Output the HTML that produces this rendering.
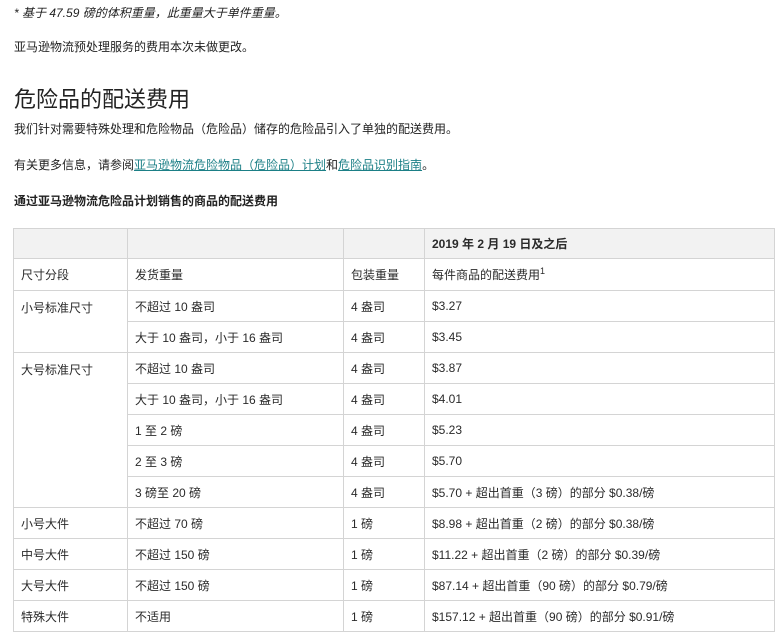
<!DOCTYPE html>
<html><head><meta charset="utf-8"><style>
body{margin:0;background:#fff;font-family:"Liberation Sans","Noto Sans CJK SC",sans-serif;color:#222;font-size:12px;width:779px;height:640px;overflow:hidden;position:relative}
.t{position:absolute;left:14px;white-space:nowrap}
a{color:#1b7f86;text-decoration:underline}
table{position:absolute;left:13px;top:228px;border-collapse:collapse;table-layout:fixed;width:762px}
td{border:1px solid #d4d4d4;padding:0 0 0 7px;height:30px;font-size:12px;vertical-align:middle;white-space:nowrap;color:#2a2a2a}
tr.h td{background:#f2f2f2;height:29px;font-weight:bold}
td.top{vertical-align:top;padding-top:8px}
sup{font-size:9px}
</style></head><body>
<div class="t" style="top:4px;font-style:italic;font-size:12px">* 基于 47.59 磅的体积重量，此重量大于单件重量。</div>
<div class="t" style="top:38px">亚马逊物流预处理服务的费用本次未做更改。</div>
<div class="t" style="top:82px;font-size:22px;color:#222">危险品的配送费用</div>
<div class="t" style="top:120px">我们针对需要特殊处理和危险物品（危险品）储存的危险品引入了单独的配送费用。</div>
<div class="t" style="top:156px">有关更多信息，请参阅<a>亚马逊物流危险物品（危险品）计划</a>和<a>危险品识别指南</a>。</div>
<div class="t" style="top:192px;font-weight:bold">通过亚马逊物流危险品计划销售的商品的配送费用</div>
<table>
<colgroup><col style="width:114px"><col style="width:216px"><col style="width:81px"><col></colgroup>
<tr class="h"><td></td><td></td><td></td><td>2019 年 2 月 19 日及之后</td></tr>
<tr><td style="height:31px">尺寸分段</td><td>发货重量</td><td>包装重量</td><td>每件商品的配送费用<sup>1</sup></td></tr>
<tr><td rowspan="2" class="top">小号标准尺寸</td><td>不超过 10 盎司</td><td>4 盎司</td><td>$3.27</td></tr>
<tr><td>大于 10 盎司，小于 16 盎司</td><td>4 盎司</td><td>$3.45</td></tr>
<tr><td rowspan="5" class="top">大号标准尺寸</td><td>不超过 10 盎司</td><td>4 盎司</td><td>$3.87</td></tr>
<tr><td>大于 10 盎司，小于 16 盎司</td><td>4 盎司</td><td>$4.01</td></tr>
<tr><td>1 至 2 磅</td><td>4 盎司</td><td>$5.23</td></tr>
<tr><td>2 至 3 磅</td><td>4 盎司</td><td>$5.70</td></tr>
<tr><td>3 磅至 20 磅</td><td>4 盎司</td><td>$5.70 + 超出首重（3 磅）的部分 $0.38/磅</td></tr>
<tr><td>小号大件</td><td>不超过 70 磅</td><td>1 磅</td><td>$8.98 + 超出首重（2 磅）的部分 $0.38/磅</td></tr>
<tr><td>中号大件</td><td>不超过 150 磅</td><td>1 磅</td><td>$11.22 + 超出首重（2 磅）的部分 $0.39/磅</td></tr>
<tr><td>大号大件</td><td>不超过 150 磅</td><td>1 磅</td><td>$87.14 + 超出首重（90 磅）的部分 $0.79/磅</td></tr>
<tr><td>特殊大件</td><td>不适用</td><td>1 磅</td><td>$157.12 + 超出首重（90 磅）的部分 $0.91/磅</td></tr>
</table>
</body></html>
